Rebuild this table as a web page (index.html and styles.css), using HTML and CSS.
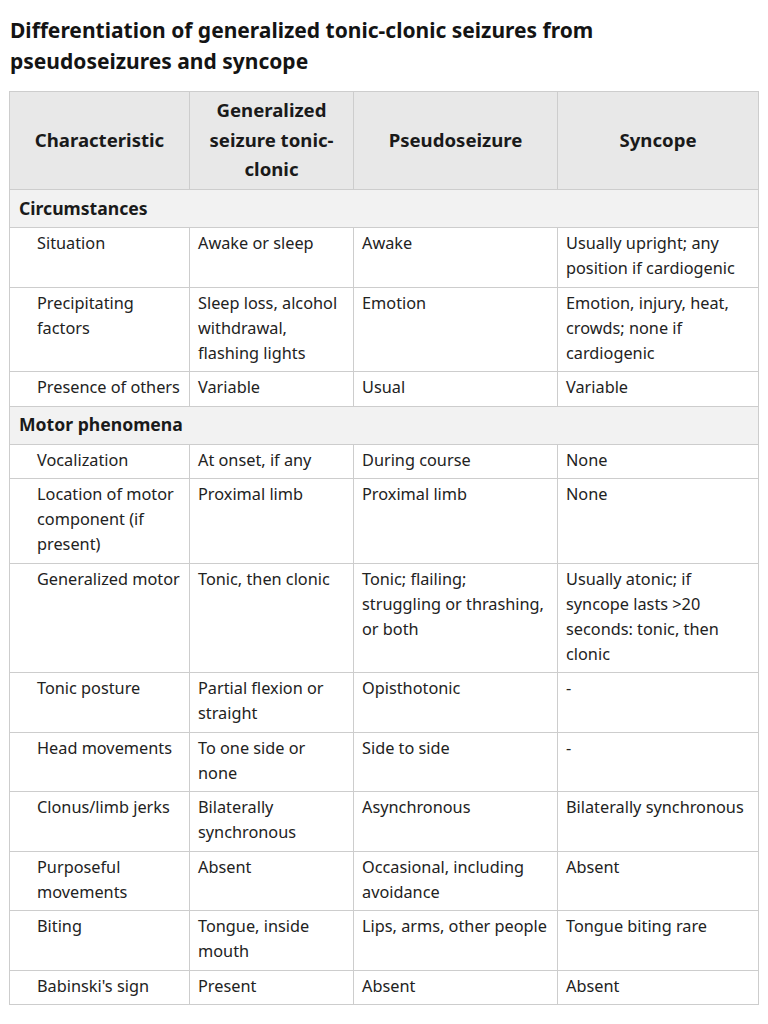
FILE: index.html
```html
<!DOCTYPE html>
<html>
<head>
<meta charset="utf-8">
<link rel="stylesheet" href="styles.css">
</head>
<body>
<h2 class="title">Differentiation of generalized tonic-clonic seizures from pseudoseizures and syncope</h2>
<table class="grid">
<colgroup>
<col class="c1"><col class="c2"><col class="c3"><col class="c4">
</colgroup>
<thead>
<tr><th>Characteristic</th><th>Generalized seizure tonic-clonic</th><th>Pseudoseizure</th><th>Syncope</th></tr>
</thead>
<tbody>
<tr class="section"><td colspan="4">Circumstances</td></tr>
<tr><td class="label">Situation</td><td>Awake or sleep</td><td>Awake</td><td>Usually upright; any position if cardiogenic</td></tr>
<tr><td class="label">Precipitating factors</td><td>Sleep loss, alcohol withdrawal, flashing lights</td><td>Emotion</td><td>Emotion, injury, heat, crowds; none if cardiogenic</td></tr>
<tr><td class="label">Presence of others</td><td>Variable</td><td>Usual</td><td>Variable</td></tr>
<tr class="section"><td colspan="4">Motor phenomena</td></tr>
<tr><td class="label">Vocalization</td><td>At onset, if any</td><td>During course</td><td>None</td></tr>
<tr><td class="label">Location of motor component (if present)</td><td>Proximal limb</td><td>Proximal limb</td><td>None</td></tr>
<tr><td class="label">Generalized motor</td><td>Tonic, then clonic</td><td>Tonic; flailing; struggling or thrashing, or both</td><td>Usually atonic; if syncope lasts &gt;20 seconds: tonic, then clonic</td></tr>
<tr><td class="label">Tonic posture</td><td>Partial flexion or straight</td><td>Opisthotonic</td><td>-</td></tr>
<tr><td class="label">Head movements</td><td>To one side or none</td><td>Side to side</td><td>-</td></tr>
<tr><td class="label">Clonus/limb jerks</td><td>Bilaterally synchronous</td><td>Asynchronous</td><td>Bilaterally synchronous</td></tr>
<tr><td class="label">Purposeful movements</td><td>Absent</td><td>Occasional, including avoidance</td><td>Absent</td></tr>
<tr><td class="label">Biting</td><td>Tongue, inside mouth</td><td>Lips, arms, other people</td><td>Tongue biting rare</td></tr>
<tr><td class="label">Babinski's sign</td><td>Present</td><td>Absent</td><td>Absent</td></tr>
</tbody>
</table>
</body>
</html>
```

FILE: styles.css
```css
html, body {
  margin: 0;
  padding: 0;
  background: #ffffff;
}
body {
  font-family: "Noto Sans", "Open Sans", sans-serif;
  color: #222222;
  padding: 0 10px 0 10px;
}
.title {
  font-size: 21px;
  font-weight: 700;
  line-height: 31px;
  margin: 15px 0 14px 0;
  color: #141414;
}
.grid {
  border-collapse: collapse;
  table-layout: fixed;
  width: 749px;
  margin-left: -1px;
  font-size: 16.3px;
  line-height: 25px;
}
.c1 { width: 180px; }
.c2 { width: 164px; }
.c3 { width: 204px; }
.c4 { width: 201px; }
.grid th, .grid td {
  border: 1px solid #cdcdcd;
  vertical-align: top;
  text-align: left;
  padding: 3px 9px 5.5px 8px;
}
.grid th {
  background: #e8e8e8;
  text-align: center;
  vertical-align: middle;
  font-size: 18.6px;
  font-weight: 700;
  line-height: 29.5px;
  padding: 3px 8px 5px 8px;
  height: 89px;
  color: #1a1a1a;
}
.grid td.label {
  padding-left: 27px;
}
.grid tr.section td {
  background: #f2f2f2;
  font-weight: 700;
  font-size: 17.6px;
  line-height: 28px;
  padding: 3.5px 9px 5.5px 9px;
  color: #1a1a1a;
}
```
